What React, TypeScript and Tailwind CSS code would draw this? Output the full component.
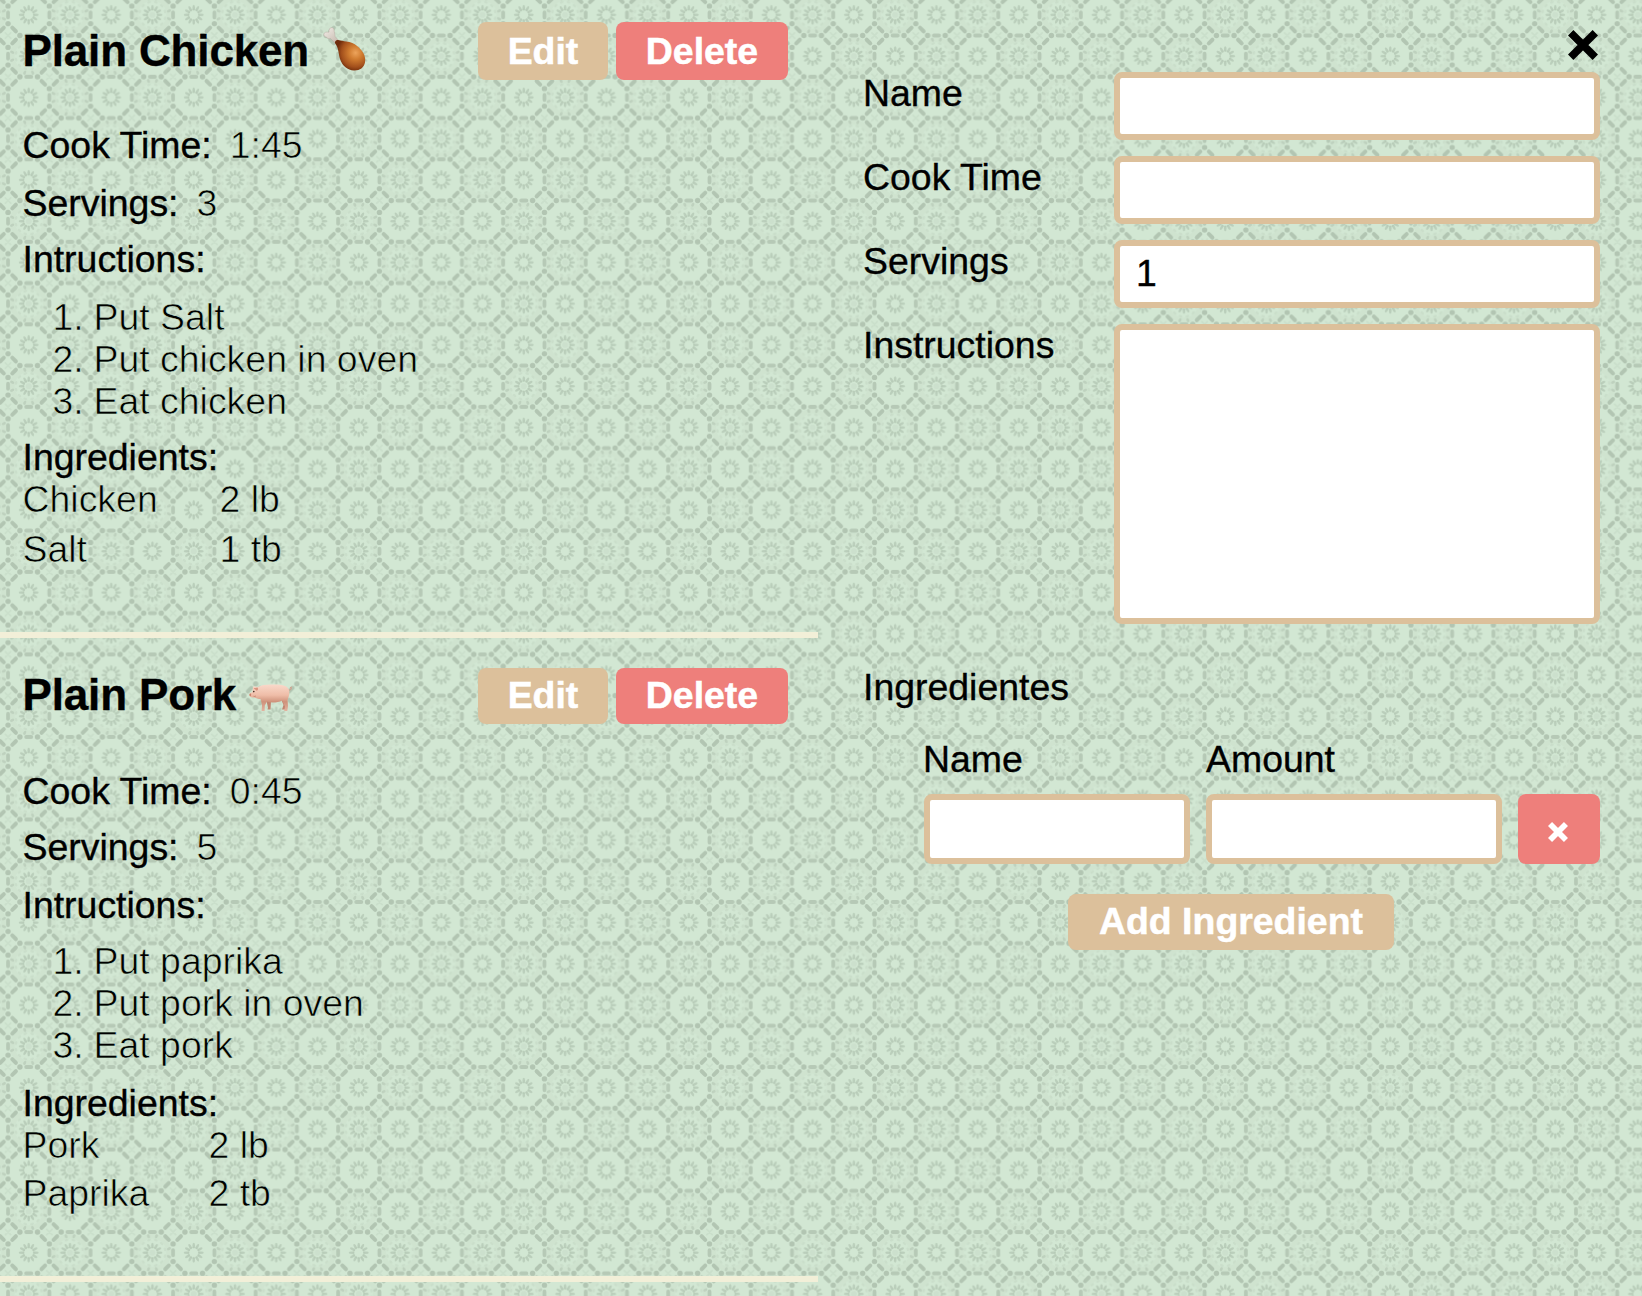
import type { ReactNode } from 'react';

const LINE = '#b2c5b2';
const ANGLES = [0, 30, 60, 90, 120, 150, 180, 210, 240, 270, 300, 330];

function Rosette({ x, y, petals }: { x: number; y: number; petals?: boolean }) {
  return (
    <g transform={`translate(${x} ${y})`}>
      {ANGLES.map((a) => (
        <ellipse key={a} cx="0" cy="-7.1" rx="1.3" ry="2.9" fill={LINE} opacity="0.72" transform={`rotate(${a})`} />
      ))}
      <circle r="5.4" fill="none" stroke={LINE} strokeWidth="1.6" opacity="0.4" />
      {petals && (
        <g>
          <circle r="3" fill={LINE} opacity="0.2" />
          <circle r="16.5" fill="none" stroke={LINE} strokeWidth="5" opacity="0.1" />
          {ANGLES.map((a) => (
            <ellipse key={a} cx="0" cy="-13" rx="2" ry="1.2" fill={LINE} opacity="0.28" transform={`rotate(${a + 15})`} />
          ))}
          {[0, 90, 180, 270].map((a) => (
            <g key={a} transform={`rotate(${a})`} fill={LINE} opacity="0.6">
              <ellipse cx="-4" cy="-16.5" rx="1.4" ry="2.2" transform="rotate(-25 -4 -16.5)" />
              <ellipse cx="4" cy="-16.5" rx="1.4" ry="2.2" transform="rotate(25 4 -16.5)" />
            </g>
          ))}
        </g>
      )}
    </g>
  );
}

function Edges({ x, y }: { x: number; y: number }) {
  return (
    <g transform={`translate(${x} ${y})`} stroke={LINE} fill={LINE} strokeLinecap="round">
      <g strokeWidth="3.8" opacity="0.85">
        <path d="M-2.6 20.63H2.6M20.63 -2.6V2.6" />
      </g>
      <g stroke="none">
        <circle cx="-8.8" cy="20.63" r="2.7" />
        <circle cx="8.8" cy="20.63" r="2.7" />
        <circle cx="20.63" cy="-8.8" r="2.7" />
        <circle cx="20.63" cy="8.8" r="2.7" />
      </g>
      <g strokeWidth="4">
        <path d="M12.8 16.4L16.4 12.8M-12.8 16.4L-16.4 12.8M12.8 -16.4L16.4 -12.8M-12.8 -16.4L-16.4 -12.8" />
      </g>
      <g strokeWidth="1.8" opacity="0.25">
        <path d="M18 18L23.3 23.3M23.3 18L18 23.3" />
      </g>
    </g>
  );
}

function Wallpaper() {
  return (
    <svg className="absolute inset-0 -z-10 h-full w-full" aria-hidden="true">
      <defs>
        <filter id="soften" x="0" y="0" width="1" height="1">
          <feGaussianBlur stdDeviation="0.6" />
        </filter>
        <pattern id="tile" x="8.07" y="-5.73" width="82.52" height="82.52" patternUnits="userSpaceOnUse">
          <rect width="83" height="83" fill="#d2e7d3" />
          {[-1, 0, 1, 2].map((i) =>
            [-1, 0, 1, 2].map((j) => <Edges key={`${i}${j}`} x={20.63 + i * 41.26} y={20.63 + j * 41.26} />),
          )}
          <Rosette x={20.63} y={20.63} />
          <Rosette x={61.89} y={61.89} />
          <Rosette x={61.89} y={20.63} petals />
          <Rosette x={20.63} y={61.89} petals />
        </pattern>
      </defs>
      <rect width="100%" height="100%" fill="#d1e6d2" />
      <rect x="-4" y="-4" width="1650" height="1304" fill="url(#tile)" filter="url(#soften)" />
    </svg>
  );
}

function Drumstick() {
  return (
    <svg className="-mt-[4px] ml-[14px] h-[44px] w-[44px]" viewBox="0 0 44 44" role="img" aria-label="Drumstick">
      <defs>
        <radialGradient id="meat" cx="0.68" cy="0.42" r="0.62">
          <stop offset="0" stopColor="#eda45c" />
          <stop offset="0.35" stopColor="#d07c30" />
          <stop offset="0.75" stopColor="#a3501c" />
          <stop offset="1" stopColor="#6f2c0c" />
        </radialGradient>
        <linearGradient id="bone" x1="0" y1="0" x2="1" y2="1">
          <stop offset="0" stopColor="#f3eee8" />
          <stop offset="1" stopColor="#c4b7ac" />
        </linearGradient>
      </defs>
      <path
        d="M11.5 15.5L7.5 11.4C5.8 12.2 3.9 11.4 3.4 10C1.8 10 .4 8.5 .8 7C1.2 5.3 3.2 4.6 6 5.2C5.7 2.6 6.8 .6 8.6 .6C10.3 .6 11.3 2.1 11.2 4.3C12 6 11.7 8.2 12.2 9.7L16 13.8Z"
        fill="url(#bone)"
        stroke="#b5aaa0"
        strokeWidth="0.5"
      />
      <path
        d="M12.2 14.6C13.5 12.7 15.5 12.8 17.5 13.6C22 14.7 28 14.4 33.5 18.5C39.5 22.8 43.3 29.5 42 35.5C40.8 41 36.500 43.7 31 43.4C24.5 43.2 19.5 39 17.2 32.5C15.6 28 15.7 22 13.2 18C12.2 16.7 11.6 15.7 12.2 14.6Z"
        fill="url(#meat)"
      />
    </svg>
  );
}

function Pig() {
  return (
    <svg className="mt-[6px] ml-[13px] h-[28px] w-[44px]" viewBox="0 0 44 28" role="img" aria-label="Pig">
      <defs>
        <linearGradient id="pork" x1="0" y1="0" x2="0" y2="1">
          <stop offset="0" stopColor="#f9d9ca" />
          <stop offset="0.4" stopColor="#efbda8" />
          <stop offset="0.65" stopColor="#cf927b" />
          <stop offset="1" stopColor="#e3b3a0" />
        </linearGradient>
      </defs>
      <path d="M39.5 6C41.5 6.5 43 5 42 3.8C41 3 40.4 4.5 42.8 3" fill="none" stroke="#d79c88" strokeWidth="1" />
      <path d="M17 15L19 23.5L18.5 25.5H21.5L22 17ZM32 15L34.5 21L33 25.5H36L37 17Z" fill="#c08570" />
      <path
        d="M4 4C3.3 2.3 5.5 1.8 8.3 3.2C12 1.2 17 .5 23 .6C31 .3 37.5 1.2 39.6 5C41.3 8.5 39.8 12.5 38.6 16.2L39 22L38.3 27H35.2L36 22.500L33 16.5C28.5 19 22 19 18 17.4L15.800 21.5L15.6 27H12.6L13 21.5L11.8 15.3C9.5 14.8 7 14.2 5 13.2C3 14 .5 13 .3 11C.3 9.2 2 8.6 3.3 8.2C3.4 6.5 3.8 5.2 4 4Z"
        fill="url(#pork)"
      />
      <path d="M8.5 3.5C9.5 5 9 6.5 7.5 6.8C6.5 5.8 5.500 5 4.6 4.2" fill="#d9937e" />
      <circle cx="4.8" cy="7.6" r="0.8" fill="#3a211a" />
      <ellipse cx="1.3" cy="10.8" rx="0.9" ry="1.4" fill="#c98370" />
      <path d="M4.5 12.2C5.5 12.6 6.3 12.4 7 11.8" fill="none" stroke="#b87560" strokeWidth="0.7" />
    </svg>
  );
}

function Cross({ className, thickness }: { className: string; thickness: number }) {
  const i = thickness * 0.354;
  return (
    <svg className={className} viewBox="0 0 30 30" aria-hidden="true">
      <path d={`M${i} ${i}L${30 - i} ${30 - i}M${30 - i} ${i}L${i} ${30 - i}`} stroke="currentColor" strokeWidth={thickness} />
    </svg>
  );
}

function Light({ children, className = '' }: { children: ReactNode; className?: string }) {
  return <span className={`[-webkit-text-stroke:0.6px_#d1e6d2] ${className}`}>{children}</span>;
}

type Recipe = {
  title: string;
  icon: ReactNode;
  time: string;
  servings: string;
  steps: string[];
  ingredients: [string, string][];
  card: string;
  button: string;
  rows: string[];
  nameCol: string;
};

const recipes: Recipe[] = [
  {
    title: 'Plain Chicken',
    icon: <Drumstick />,
    time: '1:45',
    servings: '3',
    steps: ['Put Salt', 'Put chicken in oven', 'Eat chicken'],
    ingredients: [
      ['Chicken', '2 lb'],
      ['Salt', '1 tb'],
    ],
    card: 'h-[638px] pt-[22px]',
    button: 'h-[58px]',
    rows: ['h-[58px]', 'h-[56px]', 'h-[58px]', 'mt-[14px]', 'h-[50px]'],
    nameCol: 'w-[197px]',
  },
  {
    title: 'Plain Pork',
    icon: <Pig />,
    time: '0:45',
    servings: '5',
    steps: ['Put paprika', 'Put pork in oven', 'Eat pork'],
    ingredients: [
      ['Pork', '2 lb'],
      ['Paprika', '2 tb'],
    ],
    card: 'h-[644px] pt-[30px]',
    button: 'h-[56px] pb-[2px]',
    rows: ['h-[56px]', 'h-[58px]', 'h-[56px]', 'mt-4', 'h-[48px]'],
    nameCol: 'w-[186px]',
  },
];

function RecipeCard({ r }: { r: Recipe }) {
  return (
    <section className={`border-b-[6px] border-[#f2efd8] pr-[30px] pl-[22.5px] ${r.card}`}>
      <header className="flex h-[102px] items-start justify-between">
        <div className={`flex items-center ${r.button}`}>
          <h2 className="text-[44px] font-bold tracking-[-0.15px] whitespace-nowrap">{r.title}</h2>
          {r.icon}
        </div>
        <div className="flex gap-2 font-bold text-white [-webkit-text-stroke:0.5px_white]">
          <button className={`w-[130px] rounded-lg bg-[#dcc09b] ${r.button}`}>Edit</button>
          <button className={`w-[172px] rounded-lg bg-[#ee7f7b] ${r.button}`}>Delete</button>
        </div>
      </header>
      <p className={r.rows[0]}>
        Cook Time:<Light className="ml-[18px]">{r.time}</Light>
      </p>
      <p className={r.rows[1]}>
        Servings:<Light className="ml-[18px]">{r.servings}</Light>
      </p>
      <p className={r.rows[2]}>Intructions:</p>
      <ol className="ml-[30px]">
        {r.steps.map((s, i) => (
          <li key={s} className="flex">
            <Light className="w-[41px]">{i + 1}.</Light>
            <Light>{s}</Light>
          </li>
        ))}
      </ol>
      <p className={r.rows[3]}>Ingredients:</p>
      {r.ingredients.map(([name, amount], i) => (
        <div key={name} className={`flex ${i === 0 ? r.rows[4] : ''}`}>
          <Light className={r.nameCol}>{name}</Light>
          <Light>{amount}</Light>
        </div>
      ))}
    </section>
  );
}

const FIELD = 'block rounded-lg border-[6px] border-[#dcc09b] bg-white px-4 outline-none';

function RecipeForm() {
  return (
    <form className="w-[737px] pt-[30px]">
      <div className="flex h-[42px] justify-end pr-[2px]">
        <Cross className="h-[30px] w-[30px]" thickness={7.6} />
      </div>
      <div className="grid grid-cols-[251px_486px] gap-y-4">
        <label>Name</label>
        <input className={`h-[68px] ${FIELD}`} />
        <label>Cook Time</label>
        <input className={`h-[68px] ${FIELD}`} />
        <label>Servings</label>
        <input className={`h-[68px] pb-0.5 ${FIELD}`} defaultValue="1" />
        <label>Instructions</label>
        <textarea className={`h-[300px] resize-none ${FIELD}`} />
      </div>
      <p className="mt-[42px]">Ingredientes</p>
      <div className="mt-[30px] ml-[61px] grid grid-cols-[266px_296px_82px] gap-x-4 gap-y-[14px]">
        <label className="-ml-px">Name</label>
        <label className="col-span-2">Amount</label>
        <input className={`h-[70px] w-full ${FIELD}`} />
        <input className={`h-[70px] w-full ${FIELD}`} />
        <button type="button" className="flex h-[70px] items-center justify-center rounded-lg bg-[#ee7f7b] pt-[6px] pr-[2px] text-white">
          <Cross className="h-5 w-5" thickness={8.6} />
        </button>
      </div>
      <button
        type="button"
        className="mt-[30px] ml-[205px] h-[56px] w-[326px] rounded-lg bg-[#dcc09b] pb-0.5 font-bold text-white [-webkit-text-stroke:0.5px_white]"
      >
        Add Ingredient
      </button>
    </form>
  );
}

export default function App() {
  return (
    <div className="relative isolate h-[1296px] w-[1642px] overflow-hidden font-['Liberation_Sans',Arial,sans-serif] text-[37.44px] leading-[42px] text-black [-webkit-text-stroke:0.35px_currentColor]">
      <Wallpaper />
      <div className="flex gap-[45px]">
        <main className="w-[818px]">
          {recipes.map((r) => (
            <RecipeCard key={r.title} r={r} />
          ))}
        </main>
        <RecipeForm />
      </div>
    </div>
  );
}
